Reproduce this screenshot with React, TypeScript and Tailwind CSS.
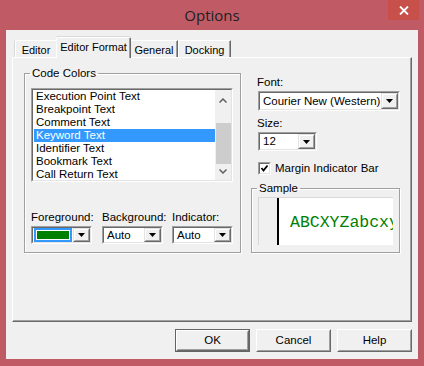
import React from "react";

function Sunken({ className = "", children }: { className?: string; children?: React.ReactNode }) {
  return (
    <div className={"border border-t-[#a0a0a0] border-l-[#a0a0a0] border-r-white border-b-white " + className}>
      <div className="w-full h-full border border-t-[#696969] border-l-[#696969] border-r-[#e3e3e3] border-b-[#e3e3e3] bg-white flex">
        {children}
      </div>
    </div>
  );
}

function Arrow() {
  return (
    <svg width="7" height="4" viewBox="0 0 7 4">
      <polygon points="0,0 7,0 3.5,4" fill="#000" />
    </svg>
  );
}

function DropBtn() {
  return (
    <div className="w-[17px] h-full border border-t-[#e3e3e3] border-l-[#e3e3e3] border-r-[#696969] border-b-[#696969]">
      <div className="w-full h-full border border-t-white border-l-white border-r-[#a0a0a0] border-b-[#a0a0a0] bg-[#f0f0f0] flex items-center justify-center">
        <Arrow />
      </div>
    </div>
  );
}

function Combo({ w, h, text, color }: { w: string; h: string; text?: string; color?: boolean }) {
  return (
    <Sunken className={w + " " + h}>
      <div className="flex-1 flex items-center min-w-0 overflow-hidden">
        {color ? (
          <div className="ml-[1px] mr-[1px] h-[14px] flex-1 bg-[#3399ff] flex items-center px-[2px]">
            <div className="w-full h-[10px] border border-white bg-[#008000]" />
          </div>
        ) : (
          <span className="pl-[3px] whitespace-nowrap text-[11.5px]">{text}</span>
        )}
      </div>
      <DropBtn />
    </Sunken>
  );
}

function Button({ label, def }: { label: string; def?: boolean }) {
  return (
    <div className={"w-[75px] h-[23px] " + (def ? "border border-[#646464]" : "")}>
      <div className="w-full h-full border border-t-white border-l-white border-r-[#696969] border-b-[#696969]">
        <div className="w-full h-full border border-t-[#f0f0f0] border-l-[#f0f0f0] border-r-[#a0a0a0] border-b-[#a0a0a0] bg-[#f0f0f0] flex items-center justify-center text-[11.5px]">
          {label}
        </div>
      </div>
    </div>
  );
}

const items = [
  "Execution Point Text",
  "Breakpoint Text",
  "Comment Text",
  "Keyword Text",
  "Identifier Text",
  "Bookmark Text",
  "Call Return Text",
];

export default function App() {
  return (
    <div className="w-[424px] h-[366px] bg-[#c05b66] relative flex flex-col font-['Liberation_Sans',sans-serif] text-[11px] text-black leading-[13px]">
      <div className="h-[30px] flex items-center justify-center text-[15px] font-['Open_Sans',sans-serif] text-[#202020] leading-none pt-[1px]">
        Options
      </div>
      <div className="absolute right-[5px] top-0 w-[31px] h-[20px] bg-[#c8504b] flex items-center justify-center">
        <svg width="10" height="9" viewBox="0 0 10 9">
          <path d="M1 0.5 L9 8.5 M9 0.5 L1 8.5" stroke="#fff" strokeWidth="1.8" />
        </svg>
      </div>
      <div className="mx-[6px] h-[329px] bg-[#f0f0f0] flex flex-col px-[6px] pt-[7px]">
        {/* tabs */}
        <div className="h-[20px] flex items-end pl-[3px]">
          <div className="w-[41px] h-[17px] border-t border-l border-white rounded-tl-[2px] shadow-[-1px_0_0_#d9d9d9] flex items-center justify-center pt-[2px] text-[11px]">
            Editor
          </div>
          <div className="relative z-10 mb-[-1px] w-[75px] h-[21px] border-t border-l border-r border-t-white border-l-white border-r-[#696969] rounded-t-[2px] bg-[#f0f0f0] shadow-[inset_-1px_0_0_#a0a0a0,0_-1px_0_#d9d9d9] flex items-start justify-center pt-[3px] text-[11px]">
            Editor Format
          </div>
          <div className="w-[47px] h-[17px] border-t border-r border-t-white border-r-[#696969] shadow-[inset_-1px_0_0_#a0a0a0] flex items-center justify-center pt-[2px] text-[11px]">
            General
          </div>
          <div className="w-[53px] h-[17px] border-t border-l border-r border-t-white border-l-white border-r-[#696969] shadow-[inset_-1px_0_0_#a0a0a0] flex items-center justify-center pt-[2px] text-[11px]">
            Docking
          </div>
        </div>
        {/* panel */}
        <div className="h-[265px] border border-t-white border-l-white border-r-[#696969] border-b-[#696969]">
          <div className="w-full h-full border-r border-b border-r-[#a0a0a0] border-b-[#a0a0a0] flex pl-[11px] pt-[9px]">
            {/* Code Colors */}
            <fieldset className="w-[217px] h-[186px] border border-[#a0a0a0] shadow-[1px_1px_0_#fff,inset_1px_1px_0_#fff] px-[6px] pt-[8px] flex flex-col">
              <legend className="ml-[-1px] px-[2px] leading-[13px] text-[11.5px]">Code Colors</legend>
              <Sunken className="w-[202px] h-[94px]">
                <div className="flex-1 flex flex-col overflow-hidden pt-0">
                  {items.map((t, i) => (
                    <div
                      key={t}
                      className={
                        "h-[13px] shrink-0 pl-[2px] ml-[1px] whitespace-nowrap text-[11.5px] leading-[13px] " +
                        (i === 3 ? "bg-[#3399ff] text-white" : "")
                      }
                    >
                      {t}
                    </div>
                  ))}
                </div>
                <div className="w-[16px] bg-[#f0f0f0] flex flex-col items-center">
                  <div className="h-[17px] flex items-center justify-center pt-[3px]">
                    <svg width="8" height="5" viewBox="0 0 8 5">
                      <path d="M0.5 4.5 L4 1 L7.5 4.5" stroke="#606060" strokeWidth="1.5" fill="none" />
                    </svg>
                  </div>
                  <div className="h-[16px]" />
                  <div className="w-[15px] h-[41px] bg-[#cdcdcd]" />
                  <div className="flex-1 flex items-center justify-center pb-[1px]">
                    <svg width="8" height="5" viewBox="0 0 8 5">
                      <path d="M0.5 0.5 L4 4 L7.5 0.5" stroke="#606060" strokeWidth="1.5" fill="none" />
                    </svg>
                  </div>
                </div>
              </Sunken>
              <div className="flex mt-[29px]">
                <div className="flex flex-col w-[61px]">
                  <span className="h-[13px] text-[11.5px] whitespace-nowrap">Foreground:</span>
                  <div className="mt-[2px]">
                    <Combo w="w-[61px]" h="h-[18px]" color />
                  </div>
                </div>
                <div className="flex flex-col w-[61px] ml-[10px]">
                  <span className="h-[13px] text-[11.5px] whitespace-nowrap">Background:</span>
                  <div className="mt-[2px]">
                    <Combo w="w-[61px]" h="h-[18px]" text="Auto" />
                  </div>
                </div>
                <div className="flex flex-col w-[61px] ml-[9px]">
                  <span className="h-[13px] text-[11.5px] whitespace-nowrap">Indicator:</span>
                  <div className="mt-[2px]">
                    <Combo w="w-[61px]" h="h-[18px]" text="Auto" />
                  </div>
                </div>
              </div>
            </fieldset>
            {/* right */}
            <div className="ml-[10px] w-[149px] flex flex-col">
              <span className="ml-[6px] mt-[9px] h-[13px] text-[11.5px]">Font:</span>
              <div className="ml-[7px] mt-[2px]">
                <Combo w="w-[142px]" h="h-[20px]" text="Courier New (Western)" />
              </div>
              <span className="ml-[6px] mt-[6px] h-[13px] text-[11.5px]">Size:</span>
              <div className="ml-[7px] mt-[2px]">
                <Combo w="w-[59px]" h="h-[19px]" text="12" />
              </div>
              <div className="ml-[7px] mt-[11px] flex items-center h-[13px]">
                <Sunken className="w-[13px] h-[13px]">
                  <svg width="9" height="9" viewBox="0 0 9 9">
                    <path d="M1.5 4 L3.5 6.5 L7.5 1.5" stroke="#000" strokeWidth="1.8" fill="none" />
                  </svg>
                </Sunken>
                <span className="ml-[4px] text-[11.5px]">Margin Indicator Bar</span>
              </div>
              <fieldset className="mt-[7px] w-[148px] h-[71px] border border-[#a0a0a0] shadow-[1px_1px_0_#fff,inset_1px_1px_0_#fff] px-[6px] pt-[2px]">
                <legend className="ml-[-1px] px-[2px] leading-[13px] text-[11.5px]">Sample</legend>
                <div className="w-[135px] h-[48px] flex border-t border-l border-[#d8d8d8] overflow-hidden">
                  <div className="w-[20px] bg-[#f0f0f0] border-r-2 border-black" />
                  <div className="flex-1 bg-white flex items-center pl-[11px] pt-[4px] overflow-hidden">
                    <span className="font-['Liberation_Mono',monospace] text-[16.5px] text-[#008000] whitespace-nowrap leading-none">
                      ABCXYZabcxyz
                    </span>
                  </div>
                </div>
              </fieldset>
            </div>
          </div>
        </div>
        {/* buttons */}
        <div className="flex justify-end gap-[6px] pt-[7px]">
          <Button label="OK" def />
          <Button label="Cancel" />
          <Button label="Help" />
        </div>
      </div>
    </div>
  );
}
